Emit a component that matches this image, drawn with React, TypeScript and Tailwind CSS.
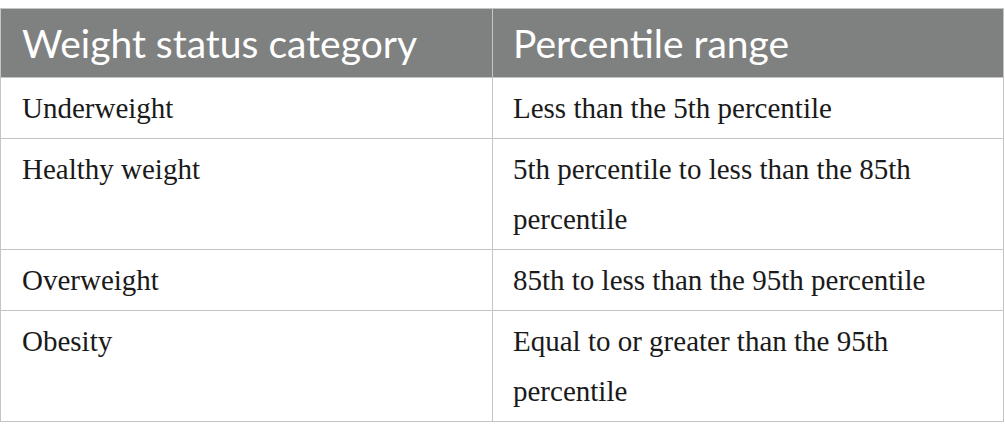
const rows: { category: string; range: string }[] = [
  { category: "Underweight", range: "Less than the 5th percentile" },
  { category: "Healthy weight", range: "5th percentile to less than the 85th percentile" },
  { category: "Overweight", range: "85th to less than the 95th percentile" },
  { category: "Obesity", range: "Equal to or greater than the 95th percentile" },
];

export default function App() {
  return (
    <div className="w-[1005px] h-[438px] bg-white pt-2">
      <table className="w-[1004px] border-collapse table-fixed">
        <colgroup>
          <col className="w-[492px]" />
          <col />
        </colgroup>
        <thead>
          <tr className="bg-[#7f8180]">
            <th className="border border-[#c4c4c4] pl-[21px] pr-4 h-[69px] text-left align-middle font-normal text-white text-[39px] leading-[48px] font-['Lato',sans-serif]">
              Weight status category
            </th>
            <th className="border border-[#c4c4c4] pl-[20px] pr-4 h-[69px] text-left align-middle font-normal text-white text-[39px] leading-[48px] font-['Lato',sans-serif]">
              Percentile range
            </th>
          </tr>
        </thead>
        <tbody>
          {rows.map((row) => (
            <tr key={row.category}>
              <td className="border border-[#c4c4c4] pl-[21px] pr-4 py-[5px] align-top text-[#1a1a1a] text-[29px] leading-[50px] font-['Liberation_Serif',serif]">
                {row.category}
              </td>
              <td className="border border-[#c4c4c4] pl-[20px] pr-[40px] py-[5px] align-top text-[#1a1a1a] text-[29px] leading-[50px] font-['Liberation_Serif',serif]">
                {row.range}
              </td>
            </tr>
          ))}
        </tbody>
      </table>
    </div>
  );
}
